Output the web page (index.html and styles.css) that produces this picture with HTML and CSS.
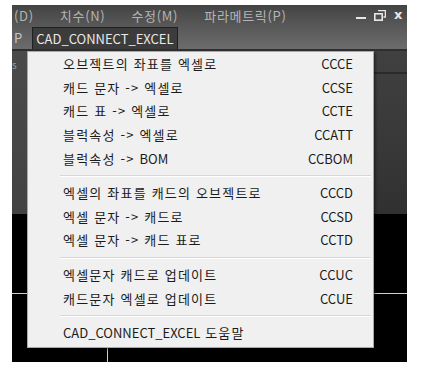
FILE: index.html
```html
<!DOCTYPE html>
<html lang="ko">
<head>
    <meta charset="UTF-8">
    <title>CAD_CONNECT_EXCEL</title>
    <link rel="stylesheet" href="styles.css">
</head>
<body>
    <div class="app">
        <div class="top">
            <div class="menubar">
                <span>(D)</span>
                <span>치수(N)</span>
                <span>수정(M)</span>
                <span>파라메트릭(P)</span>
                <div class="win-buttons">
                    <span class="min"></span>
                    <svg class="restore" width="12" height="11" viewBox="0 0 12 11">
                        <path d="M4 0.5h7.5v6.5h-2" fill="none" stroke="#e6e6e6" stroke-width="1.6"/>
                        <rect x="0.8" y="3.8" width="7.4" height="6.4" fill="none" stroke="#e6e6e6" stroke-width="1.6"/>
                    </svg>
                    <span class="close">x</span>
                </div>
            </div>
            <div class="tabs">
                <span class="tab-cut">P</span>
                <span class="tab active">CAD_CONNECT_EXCEL</span>
            </div>
        </div>
        <div class="workspace">
            <div class="ribbon">
                <div class="ribbon-left"><span class="cut">s</span></div>
                <div class="ribbon-main"></div>
            </div>
            <div class="drawing">
                <div class="cross-h"></div>
                <div class="cross-v"></div>
            </div>
        </div>

        <!-- dropdown of the CAD_CONNECT_EXCEL tab -->
        <ul class="dropdown">
            <li><span class="label">오브젝트의 좌표를 엑셀로</span><span>CCCE</span></li>
            <li><span class="label">캐드 문자 -&gt; 엑셀로</span><span>CCSE</span></li>
            <li><span class="label">캐드 표 -&gt; 엑셀로</span><span>CCTE</span></li>
            <li><span class="label">블럭속성 -&gt; 엑셀로</span><span>CCATT</span></li>
            <li><span class="label">블럭속성 -&gt; <span class="en">BOM</span></span><span>CCBOM</span></li>
            <li class="sep"></li>
            <li><span class="label">엑셀의 좌표를 캐드의 오브젝트로</span><span>CCCD</span></li>
            <li><span class="label">엑셀 문자 -&gt; 캐드로</span><span>CCSD</span></li>
            <li><span class="label">엑셀 문자 -&gt; 캐드 표로</span><span>CCTD</span></li>
            <li class="sep"></li>
            <li><span class="label">엑셀문자 캐드로 업데이트</span><span>CCUC</span></li>
            <li><span class="label">캐드문자 엑셀로 업데이트</span><span>CCUE</span></li>
            <li class="sep"></li>
            <li><span class="label"><span class="en">CAD_CONNECT_EXCEL</span> 도움말</span><span></span></li>
        </ul>
    </div>
</body>
</html>
```

FILE: styles.css
```css
body {
    margin: 0;
    padding: 0;
    background-color: #ffffff;
    font-family: "Noto Sans CJK KR", "Noto Sans", sans-serif;
}

.app {
    position: relative;
    width: 395px;
    height: 357px;
    margin: 5px 0 0 12px;
    background-color: #000;
    display: flex;
    flex-direction: column;
    overflow: hidden;
}

.top {
    height: 44px;
    background: linear-gradient(#434343, #575757 45%, #6c6c6c);
    border-bottom: 2px solid #2e2e2e;
}

.menubar {
    display: flex;
    align-items: center;
    gap: 26px;
    height: 20px;
    padding-left: 2px;
    font-size: 13px;
    letter-spacing: 0.7px;
    color: #b4b4b4;
}

.win-buttons {
    margin-left: auto;
    display: flex;
    align-items: center;
    gap: 8px;
    padding-right: 4px;
}

.min {
    display: block;
    width: 10px;
    height: 2px;
    margin-top: 6px;
    background-color: #e6e6e6;
}

.close {
    font-family: "DejaVu Sans", sans-serif;
    font-weight: bold;
    font-size: 13px;
    color: #e6e6e6;
    line-height: 1;
    margin-top: -2px;
}

.tabs {
    display: flex;
    align-items: flex-end;
    height: 24px;
    font-size: 13px;
}

.tab-cut {
    color: #c4c4c4;
    padding: 0 10px 2px 2px;
}

.tab {
    color: #e8e8e8;
    background-color: #3c3c3c;
    border: 1px solid #1f1f1f;
    border-bottom: none;
    padding: 1px 3px;
    line-height: 19px;
    height: 22px;
    box-sizing: border-box;
}

.workspace {
    flex: 1;
    display: flex;
    flex-direction: column;
}

.ribbon {
    height: 163px;
    display: flex;
    background: linear-gradient(#404040, #383838 60%, #303030);
}

.ribbon-left {
    width: 15px;
    background: linear-gradient(#4a4a4a, #424242);
    color: #9a9a9a;
    font-size: 10px;
}

.cut {
    display: block;
    margin-top: 6px;
}

.ribbon-main {
    flex: 1;
    margin-top: 21px;
    border-top: 2px solid #2a2a2a;
}

.drawing {
    position: relative;
    flex: 1;
    background-color: #000;
}

.cross-h {
    position: absolute;
    left: 0;
    right: 0;
    top: 79px;
    height: 1px;
    background-color: #cfcfcf;
}

.cross-v {
    position: absolute;
    left: 95px;
    top: 0;
    bottom: 0;
    width: 1px;
    background-color: #cfcfcf;
}

.dropdown {
    position: absolute;
    left: 15px;
    top: 46px;
    width: 345px;
    margin: 0;
    padding: 0 0 2px;
    list-style: none;
    background-color: #f0f0f0;
    border: 1px solid #a8a8a8;
    box-shadow: 2px 2px 2px rgba(0, 0, 0, 0.35);
    font-size: 13px;
    color: #1b1b1b;
}

.dropdown li {
    display: flex;
    justify-content: space-between;
    align-items: center;
    height: 23.6px;
    padding: 0 20px 0 35px;
}

.dropdown .label {
    letter-spacing: 1.2px;
}

.dropdown .en {
    letter-spacing: 0;
}

.dropdown li.sep {
    height: 11px;
    padding: 0;
    margin-left: 32px;
    margin-right: 2px;
    position: relative;
}

.dropdown li.sep::after {
    content: "";
    position: absolute;
    left: 0;
    right: 0;
    top: 5px;
    height: 1px;
    background-color: #d7d7d7;
    border-bottom: 1px solid #ffffff;
}
```
